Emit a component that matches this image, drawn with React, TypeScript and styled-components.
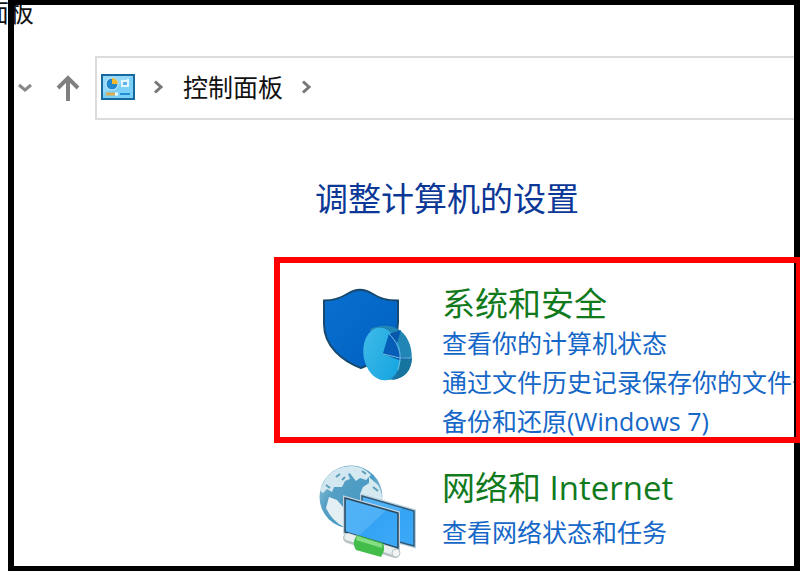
import React from "react";
import styled, { createGlobalStyle } from "styled-components";

const GlobalStyle = createGlobalStyle`
  * { box-sizing: border-box; }
  body {
    margin: 0;
    background: #fff;
    overflow: hidden;
    font-family: "Open Sans", "Noto Sans CJK SC", sans-serif;
  }
  svg { display: block; }
`;

const Window = styled.div`
  position: relative;
  min-height: 100vh;
  overflow: hidden;
  background: #fff;
`;

const Frame = styled.div`
  position: absolute;
  inset: 0 0 0 8px;
  border: 6px solid #000;
  border-top-width: 5px;
  border-bottom-width: 5px;
  pointer-events: none;
`;

const TitleBar = styled.header`
  height: 56px;
  margin-left: -16px;
  font-size: 25px;
  line-height: 24px;
  color: #111;
`;

const NavBar = styled.nav`
  display: flex;
  align-items: center;
  gap: 14px;
  padding-left: 9px;
`;

const IconButton = styled.button<{ $width: number }>`
  display: flex;
  align-items: center;
  justify-content: center;
  width: ${(p) => p.$width}px;
  height: 32px;
  padding: 0;
  border: 0;
  background: none;
`;

const AddressBar = styled.div`
  display: flex;
  flex: 1;
  align-items: center;
  height: 64px;
  padding: 0 0 2px 4px;
  border: 2px solid #dcdcdc;
  border-right: 0;
`;

const Crumb = styled.button`
  padding: 0;
  border: 0;
  background: none;
  font: inherit;
  font-size: 25px;
  line-height: 32px;
  color: #111;
`;

const Separator = styled.span`
  display: flex;
  justify-content: center;
  width: 48px;
`;

const Content = styled.main`
  padding: 52px 0 0 274px;
`;

const Heading = styled.h1`
  margin: 0 0 32px;
  padding-left: 41px;
  font-size: 33px;
  font-weight: 400;
  line-height: 53px;
  color: #0b3796;
`;

const Category = styled.section<{ $highlighted?: boolean }>`
  position: relative;
  z-index: ${(p) => (p.$highlighted ? 1 : "auto")};
  display: flex;
  gap: 24px;
  height: ${(p) => (p.$highlighted ? "186px" : "auto")};
  margin-right: -2px;
  padding: ${(p) => (p.$highlighted ? 21 : 14)}px 2px 0 38px;
  border: 6px solid ${(p) => (p.$highlighted ? "#fe0000" : "transparent")};
  white-space: nowrap;
`;

const IconSlot = styled.div<{ $lowered?: boolean }>`
  flex: none;
  width: 100px;
  padding-top: ${(p) => (p.$lowered ? 2 : 0)}px;
`;

const Details = styled.div`
  flex: 1;
  min-width: 0;
  overflow: hidden;
`;

const CategoryTitle = styled.h2<{ $roomy?: boolean }>`
  margin: 0;
  font-size: 33px;
  font-weight: 400;
  line-height: ${(p) => (p.$roomy ? 50 : 40)}px;
`;

const CategoryLink = styled.a`
  color: #117a1c;
  text-decoration: none;
`;

const TaskList = styled.ul`
  margin: 0;
  padding: 0;
  list-style: none;
`;

const TaskLink = styled.a`
  display: block;
  font-size: 25px;
  line-height: 39px;
  color: #1567c8;
  text-decoration: none;
`;

const ChevronRight = () => (
  <svg width="12" height="16" viewBox="0 0 12 16" fill="none" stroke="#777" strokeWidth="3">
    <path d="M2 2.5 8 8 2 13.5" />
  </svg>
);

const PanelIcon = () => (
  <svg width="34" height="26" viewBox="0 0 34 26">
    <rect x="1" y="1" width="32" height="24" fill="#7bd0f7" stroke="#17699f" strokeWidth="2" />
    <path d="M2 2h30L2 20z" fill="#a6e0fb" opacity=".6" />
    <circle cx="11" cy="10" r="6" fill="#2389cf" stroke="#d4f0fc" />
    <path d="M11 10V4a6 6 0 0 1 6 6z" fill="#f3b72d" />
    <path d="M21 7h6M21 12h6M21 6v7M27 5v8" stroke="#e5f7ff" strokeWidth="2" />
    <path d="M22 9.500h4" stroke="#5cb4e6" strokeWidth="3" />
    <path d="M5 20h9" stroke="#d9ad52" strokeWidth="3" />
    <path d="M14 20h3" stroke="#f2fbff" strokeWidth="3" />
    <path d="M19 20h10" stroke="#238ed3" strokeWidth="2" />
  </svg>
);

const ShieldIcon = () => (
  <svg width="100" height="100" viewBox="0 0 100 100">
    <defs>
      <linearGradient id="shield" x1="0" y1="0" x2="1" y2="1">
        <stop offset="0" stopColor="#0870cf" />
        <stop offset="1" stopColor="#0061c3" />
      </linearGradient>
      <linearGradient id="disc" x1="0" y1="0" x2="1" y2="1">
        <stop offset="0" stopColor="#42bbe9" />
        <stop offset="1" stopColor="#10a3df" />
      </linearGradient>
    </defs>
    <path
      d="M6 14.500C17 14.500 23 12 30 7.500c8-5 16-5 24 0 8 5 14 7 26 7V36c0 24-18 39-37 46C24 75 6 60 6 38z"
      fill="url(#shield)"
      stroke="#17496f"
      strokeWidth="2"
    />
    <path d="M52 43c10-5 25-5 33 4 8 8 11 23 7 34-3 9-11 13-25 13z" fill="#2186b4" />
    <path d="M80 72h14c0 12-8 21-20 22 6-7 7-14 6-22z" fill="#16749f" />
    <ellipse cx="64" cy="68" rx="18.500" ry="26.500" transform="rotate(-9 64 68)" fill="url(#disc)" />
    <path d="M65 68 71 48l12-4-4 13 4 14 10 1-12 2z" fill="#0757ac" />
    <path d="M65 68 71 48c7 6 11 15 11 24z" fill="#075eb8" />
    <path d="M71 48c8 7 12 18 11 26l-2 10M65 68l17 4h11" fill="none" stroke="#75bddf" />
  </svg>
);

const NetworkIcon = () => (
  <svg width="100" height="97" viewBox="0 0 100 97">
    <defs>
      <linearGradient id="globe" x1="0" y1="0" x2="1" y2=".6">
        <stop offset="0" stopColor="#9ccadd" />
        <stop offset=".35" stopColor="#559fc4" />
        <stop offset=".7" stopColor="#4a9bc4" />
        <stop offset="1" stopColor="#9ec8da" />
      </linearGradient>
      <linearGradient id="screen" x1="0" y1="0" x2="1" y2="1">
        <stop offset="0" stopColor="#52b3f5" />
        <stop offset=".5" stopColor="#4eb1f7" />
        <stop offset=".52" stopColor="#35a3f4" />
        <stop offset="1" stopColor="#3caaf7" />
      </linearGradient>
    </defs>
    <circle cx="33" cy="34" r="31.500" fill="url(#globe)" />
    <path d="M8 15Q18 3 33 3l3 5-6 3 2 5-5 2-3 6-8 0-2 5-5-3-4 4-3-2Q4 22 8 15z" fill="#d2e7ef" />
    <path d="M33 3q12 0 20 9l-5 5-6-2-4 3-4-5-3-4zM51 14l9 8q5 9 4 18l-10 0-4-6-8-3 3-7 6-4z" fill="#d5e9f0" />
    <path d="M11 34l8 3 6 7 3 6-3 7 1 7Q14 58 8 45z" fill="#e3eff3" />
    <path d="M18 14l4-3M24 17l3-3M55 24l5 4M44 8l4 3M8 22l4 3" stroke="#5c9ebc" strokeWidth="2" />
    <path d="M44 33 96 48v35L44 69z" fill="#38a8f6" stroke="#bcd1df" strokeWidth="4" />
    <path d="M44 33 96 48v35L44 69z" fill="url(#screen)" stroke="#315b79" strokeWidth="1.500" />
    <path d="M27 35 80 50v35L27 69z" fill="url(#screen)" stroke="#c1d2df" strokeWidth="4" />
    <path d="M27 35 80 50v35L27 69z" fill="url(#screen)" stroke="#28465b" strokeWidth="1.500" />
    <path d="M30 75 77 90" stroke="#b8c3c4" strokeWidth="10" strokeLinecap="round" />
    <path d="M30 74 77 89" stroke="#e9eeee" strokeWidth="7" strokeLinecap="round" />
    <path d="m39 72 26 8q3 6-2 14l-25-7q-5-7 1-15z" fill="#42bd49" />
    <path d="m39 73 25 8v4l-26-8z" fill="#85dd84" />
    <circle cx="78" cy="90" r="4" fill="#f2f4f4" stroke="#b7c3c5" />
  </svg>
);

interface CategoryData {
  title: string;
  tasks: string[];
  icon: React.ReactNode;
  highlighted?: boolean;
}

const categories: CategoryData[] = [
  {
    title: "系统和安全",
    tasks: ["查看你的计算机状态", "通过文件历史记录保存你的文件备份副本", "备份和还原(Windows 7)"],
    icon: <ShieldIcon />,
    highlighted: true,
  },
  {
    title: "网络和 Internet",
    tasks: ["查看网络状态和任务"],
    icon: <NetworkIcon />,
  },
];

export default function App() {
  return (
    <>
      <GlobalStyle />
      <Window>
        <TitleBar>面板</TitleBar>
        <NavBar>
          <IconButton $width={32} aria-label="最近的位置">
            <svg width="16" height="12" viewBox="0 0 16 12" fill="none" stroke="#888" strokeWidth="3">
              <path d="m2 3 6 5 6-5" />
            </svg>
          </IconButton>
          <IconButton $width={26} aria-label="向上">
            <svg width="26" height="28" viewBox="0 0 26 28" fill="none" stroke="#808080" strokeWidth="4">
              <path d="M13 27V4M3 14 13 4l10 10" />
            </svg>
          </IconButton>
          <AddressBar>
            <PanelIcon />
            <Separator><ChevronRight /></Separator>
            <Crumb>控制面板</Crumb>
            <Separator><ChevronRight /></Separator>
          </AddressBar>
        </NavBar>
        <Content>
          <Heading>调整计算机的设置</Heading>
          {categories.map((category) => (
            <Category key={category.title} $highlighted={category.highlighted}>
              <IconSlot $lowered={category.highlighted}>{category.icon}</IconSlot>
              <Details>
                <CategoryTitle $roomy={!category.highlighted}>
                  <CategoryLink href="#">{category.title}</CategoryLink>
                </CategoryTitle>
                <TaskList>
                  {category.tasks.map((task) => (
                    <li key={task}>
                      <TaskLink href="#">{task}</TaskLink>
                    </li>
                  ))}
                </TaskList>
              </Details>
            </Category>
          ))}
        </Content>
        <Frame />
      </Window>
    </>
  );
}
